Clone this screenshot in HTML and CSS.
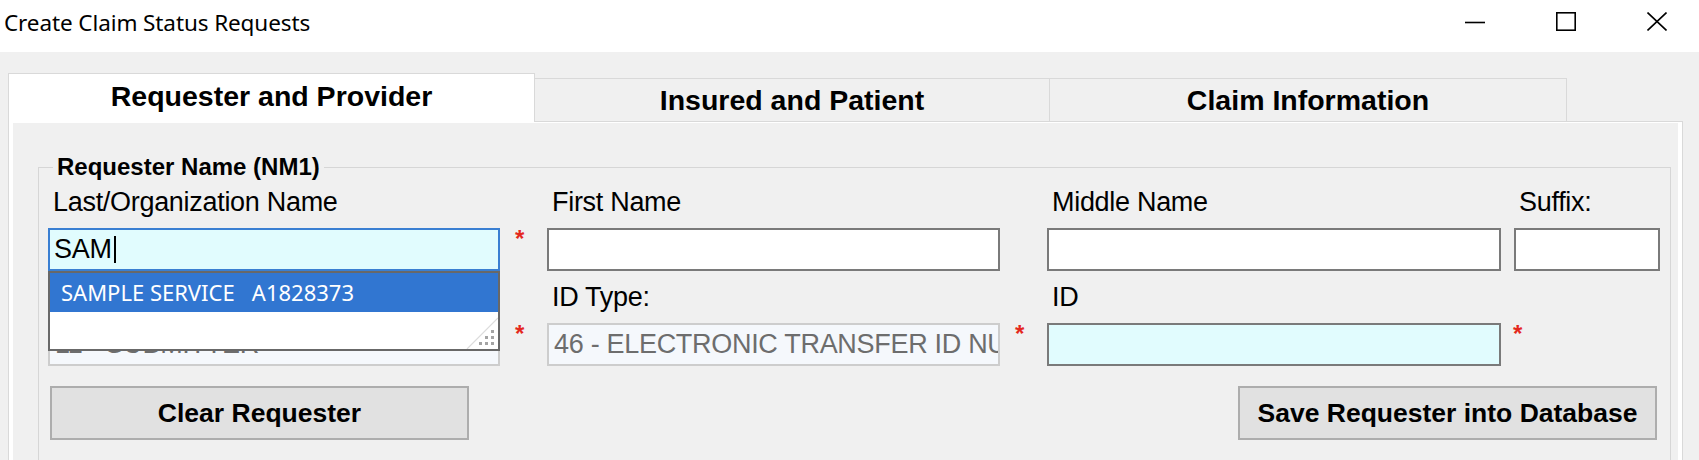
FILE: index.html
```html
<!DOCTYPE html>
<html lang="en">
<head>
<meta charset="utf-8">
<title>Create Claim Status Requests</title>
<link rel="stylesheet" href="styles.css">
</head>
<body>
<div class="window">
  <div class="titlebar">
    <div class="title">Create Claim Status Requests</div>
    <div class="controls">
      <div class="ctl"><svg width="20" height="19" viewBox="0 0 20 19"><line x1="0" y1="10.5" x2="20" y2="10.5" stroke="#000" stroke-width="1.6"/></svg></div>
      <div class="ctl"><svg width="20" height="19" viewBox="0 0 20 19"><rect x="0.8" y="0.8" width="18.4" height="17.4" fill="none" stroke="#000" stroke-width="1.6"/></svg></div>
      <div class="ctl close"><svg width="20" height="19" viewBox="0 0 20 19"><path d="M0.5 0.5 L19.5 18.5 M19.5 0.5 L0.5 18.5" stroke="#000" stroke-width="1.6" fill="none"/></svg></div>
    </div>
  </div>

  <div class="tabs">
    <div class="tab active">Requester and Provider</div>
    <div class="tab t2">Insured and Patient</div>
    <div class="tab t3">Claim Information</div>
  </div>

  <div class="tabbody">
    <div class="page">
      <fieldset class="group">
        <legend>Requester Name (NM1)</legend>
        <div class="grid">
          <div class="lbl c1 r1">Last/Organization Name</div>
          <div class="lbl c3 r1">First Name</div>
          <div class="lbl c5 r1">Middle Name</div>
          <div class="lbl c7 r1 sfx">Suffix:</div>

          <div class="field focus c1 r2">SAM<span class="caret"></span>
            <div class="dropdown">
              <div class="opt sel">SAMPLE SERVICE   A1828373</div>
              <div class="opt"></div>
              <svg class="grip" width="32" height="32" viewBox="0 0 32 32">
                <line x1="1" y1="32" x2="32" y2="1" stroke="#dcdcdc" stroke-width="1.2"/>
                <rect x="25" y="13" width="3" height="3" fill="#a4a4a4"/>
                <rect x="19" y="19" width="3" height="3" fill="#a4a4a4"/>
                <rect x="25" y="19" width="3" height="3" fill="#a4a4a4"/>
                <rect x="13" y="25" width="3" height="3" fill="#a4a4a4"/>
                <rect x="19" y="25" width="3" height="3" fill="#a4a4a4"/>
                <rect x="25" y="25" width="3" height="3" fill="#a4a4a4"/>
              </svg>
            </div>
          </div>
          <span class="req c2 r2">*</span>
          <div class="field c3 r2"></div>
          <div class="field c5 r2"></div>
          <div class="field c7 r2"></div>

          <div class="lbl c3 r3">ID Type:</div>
          <div class="lbl c5 r3">ID</div>

          <div class="field disabled c1 r4">11 - SUBMITTER</div>
          <span class="req c2 r4">*</span>
          <div class="field disabled c3 r4">46 - ELECTRONIC TRANSFER ID NU</div>
          <span class="req c4 r4">*</span>
          <div class="field cyan c5 r4"></div>
          <span class="req c6 r4 req-id">*</span>
        </div>
        <div class="buttons">
          <button class="btn" type="button">Clear Requester</button>
          <button class="btn" type="button">Save Requester into Database</button>
        </div>
      </fieldset>
    </div>
  </div>
</div>
</body>
</html>
```

FILE: styles.css
```css
html, body {
  margin: 0;
  padding: 0;
  width: 1699px;
  height: 460px;
  overflow: hidden;
  background: #f0f0f0;
}

body {
  font-family: "Liberation Sans", Arial, sans-serif;
  color: #000;
}

.window {
  width: 1699px;
}

/* ---------- title bar ---------- */
.titlebar {
  height: 52px;
  background: #fff;
  display: flex;
  justify-content: space-between;
  align-items: flex-start;
}

.title {
  font-family: "Noto Sans", "Open Sans", sans-serif;
  font-size: 22.5px;
  line-height: 30px;
  padding: 8px 0 0 4px;
  letter-spacing: -0.1px;
}

.controls {
  display: flex;
  padding-top: 12px;
}

.ctl {
  width: 91px;
  height: 19px;
  display: flex;
  justify-content: center;
  align-items: center;
}

.ctl.close {
  width: 87.5px;
  padding-left: 4px;
  box-sizing: border-box;
}

/* ---------- tabs ---------- */
.tabs {
  display: flex;
  align-items: flex-end;
  height: 48px;
  margin: 21px 0 0 8px;
}

.tab {
  box-sizing: border-box;
  height: 43px;
  border: 1px solid #d9d9d9;
  border-bottom: none;
  background: #f0f0f0;
  font-weight: bold;
  font-size: 28.5px;
  display: flex;
  align-items: center;
  justify-content: center;
  white-space: nowrap;
}

.tab.active {
  width: 527px;
  height: 49px;
  margin-bottom: -1px;
  padding-bottom: 3px;
  background: #fff;
  position: relative;
  z-index: 1;
}

.tab.t2 {
  width: 516px;
  margin-left: -1px;
}

.tab.t3 {
  width: 518px;
  margin-left: -1px;
}

.tabbody {
  margin: 0 16px 0 8px;
  border: 1px solid #d9d9d9;
  background: #fff;
  padding: 1px 4px 4px 4px;
}

.page {
  background: #f0f0f0;
  padding: 31px 7px 40px 25px;
}

/* ---------- group box ---------- */
.group {
  margin: 0;
  min-width: 0;
  border: 1px solid #d6d6d6;
  padding: 4px 11px 40px 9px;
}

.group legend {
  font-weight: bold;
  font-size: 24px;
  line-height: 26px;
  padding: 0 4px;
  margin-left: 5px;
}

.grid {
  display: grid;
  grid-template-columns: 452px 47px 453px 47px 454px 13px 146px;
  grid-template-rows: 36px 43px 36px 43px;
  row-gap: 8px;
}

.c1 { grid-column: 1; }
.c2 { grid-column: 2; }
.c3 { grid-column: 3; }
.c4 { grid-column: 4; }
.c5 { grid-column: 5; }
.c6 { grid-column: 6; }
.c7 { grid-column: 7; }
.r1 { grid-row: 1; }
.r2 { grid-row: 2; }
.r3 { grid-row: 3; }
.r4 { grid-row: 4; }

.lbl {
  font-size: 27px;
  line-height: 36px;
  letter-spacing: -0.3px;
  padding-left: 5px;
  white-space: nowrap;
}

.lbl.sfx {
  padding-left: 5px;
}

.field {
  box-sizing: border-box;
  height: 43px;
  border: 2px solid #7a7a7a;
  background: #fff;
  font-size: 27px;
  line-height: 39px;
  letter-spacing: -0.3px;
  padding-left: 4px;
  white-space: nowrap;
  overflow: hidden;
  position: relative;
}

.field.focus {
  border-color: #3a7fd2;
  background: #e1fcfe;
  overflow: visible;
}

.field.cyan {
  background: #e1fcfe;
}

.field.disabled {
  border-color: #cdcdcd;
  background: #f5f8fc;
  color: #6d6d6d;
  padding-left: 5px;
}

.caret {
  display: inline-block;
  width: 2px;
  height: 27px;
  background: #000;
  margin-left: 2px;
  vertical-align: -5px;
}

.req {
  color: #e4281e;
  font-weight: bold;
  font-size: 24px;
  line-height: 24px;
  margin: -1px 0 0 15px;
  align-self: start;
}

.req-id {
  margin-left: 12px;
}

/* ---------- autocomplete dropdown ---------- */
.dropdown {
  position: absolute;
  z-index: 5;
  left: -2px;
  top: 41px;
  width: 452px;
  height: 80px;
  box-sizing: border-box;
  border: 2px solid #686868;
  background: #fff;
  font-family: "Noto Sans", "Open Sans", sans-serif;
  letter-spacing: 0;
}

.opt {
  height: 39px;
  font-size: 22px;
  line-height: 39px;
  padding-left: 11px;
  white-space: pre;
}

.opt.sel {
  background: #3176d1;
  color: #fff;
}

.grip {
  position: absolute;
  right: 0;
  bottom: 0;
}

/* ---------- buttons ---------- */
.buttons {
  display: flex;
  justify-content: space-between;
  margin-top: 20px;
  padding: 0 2px;
}

.btn {
  width: 419px;
  height: 54px;
  box-sizing: border-box;
  border: 2px solid #adadad;
  background: #e1e1e1;
  font-family: "Liberation Sans", Arial, sans-serif;
  font-weight: bold;
  font-size: 26.5px;
  color: #000;
  padding: 0;
}
```
